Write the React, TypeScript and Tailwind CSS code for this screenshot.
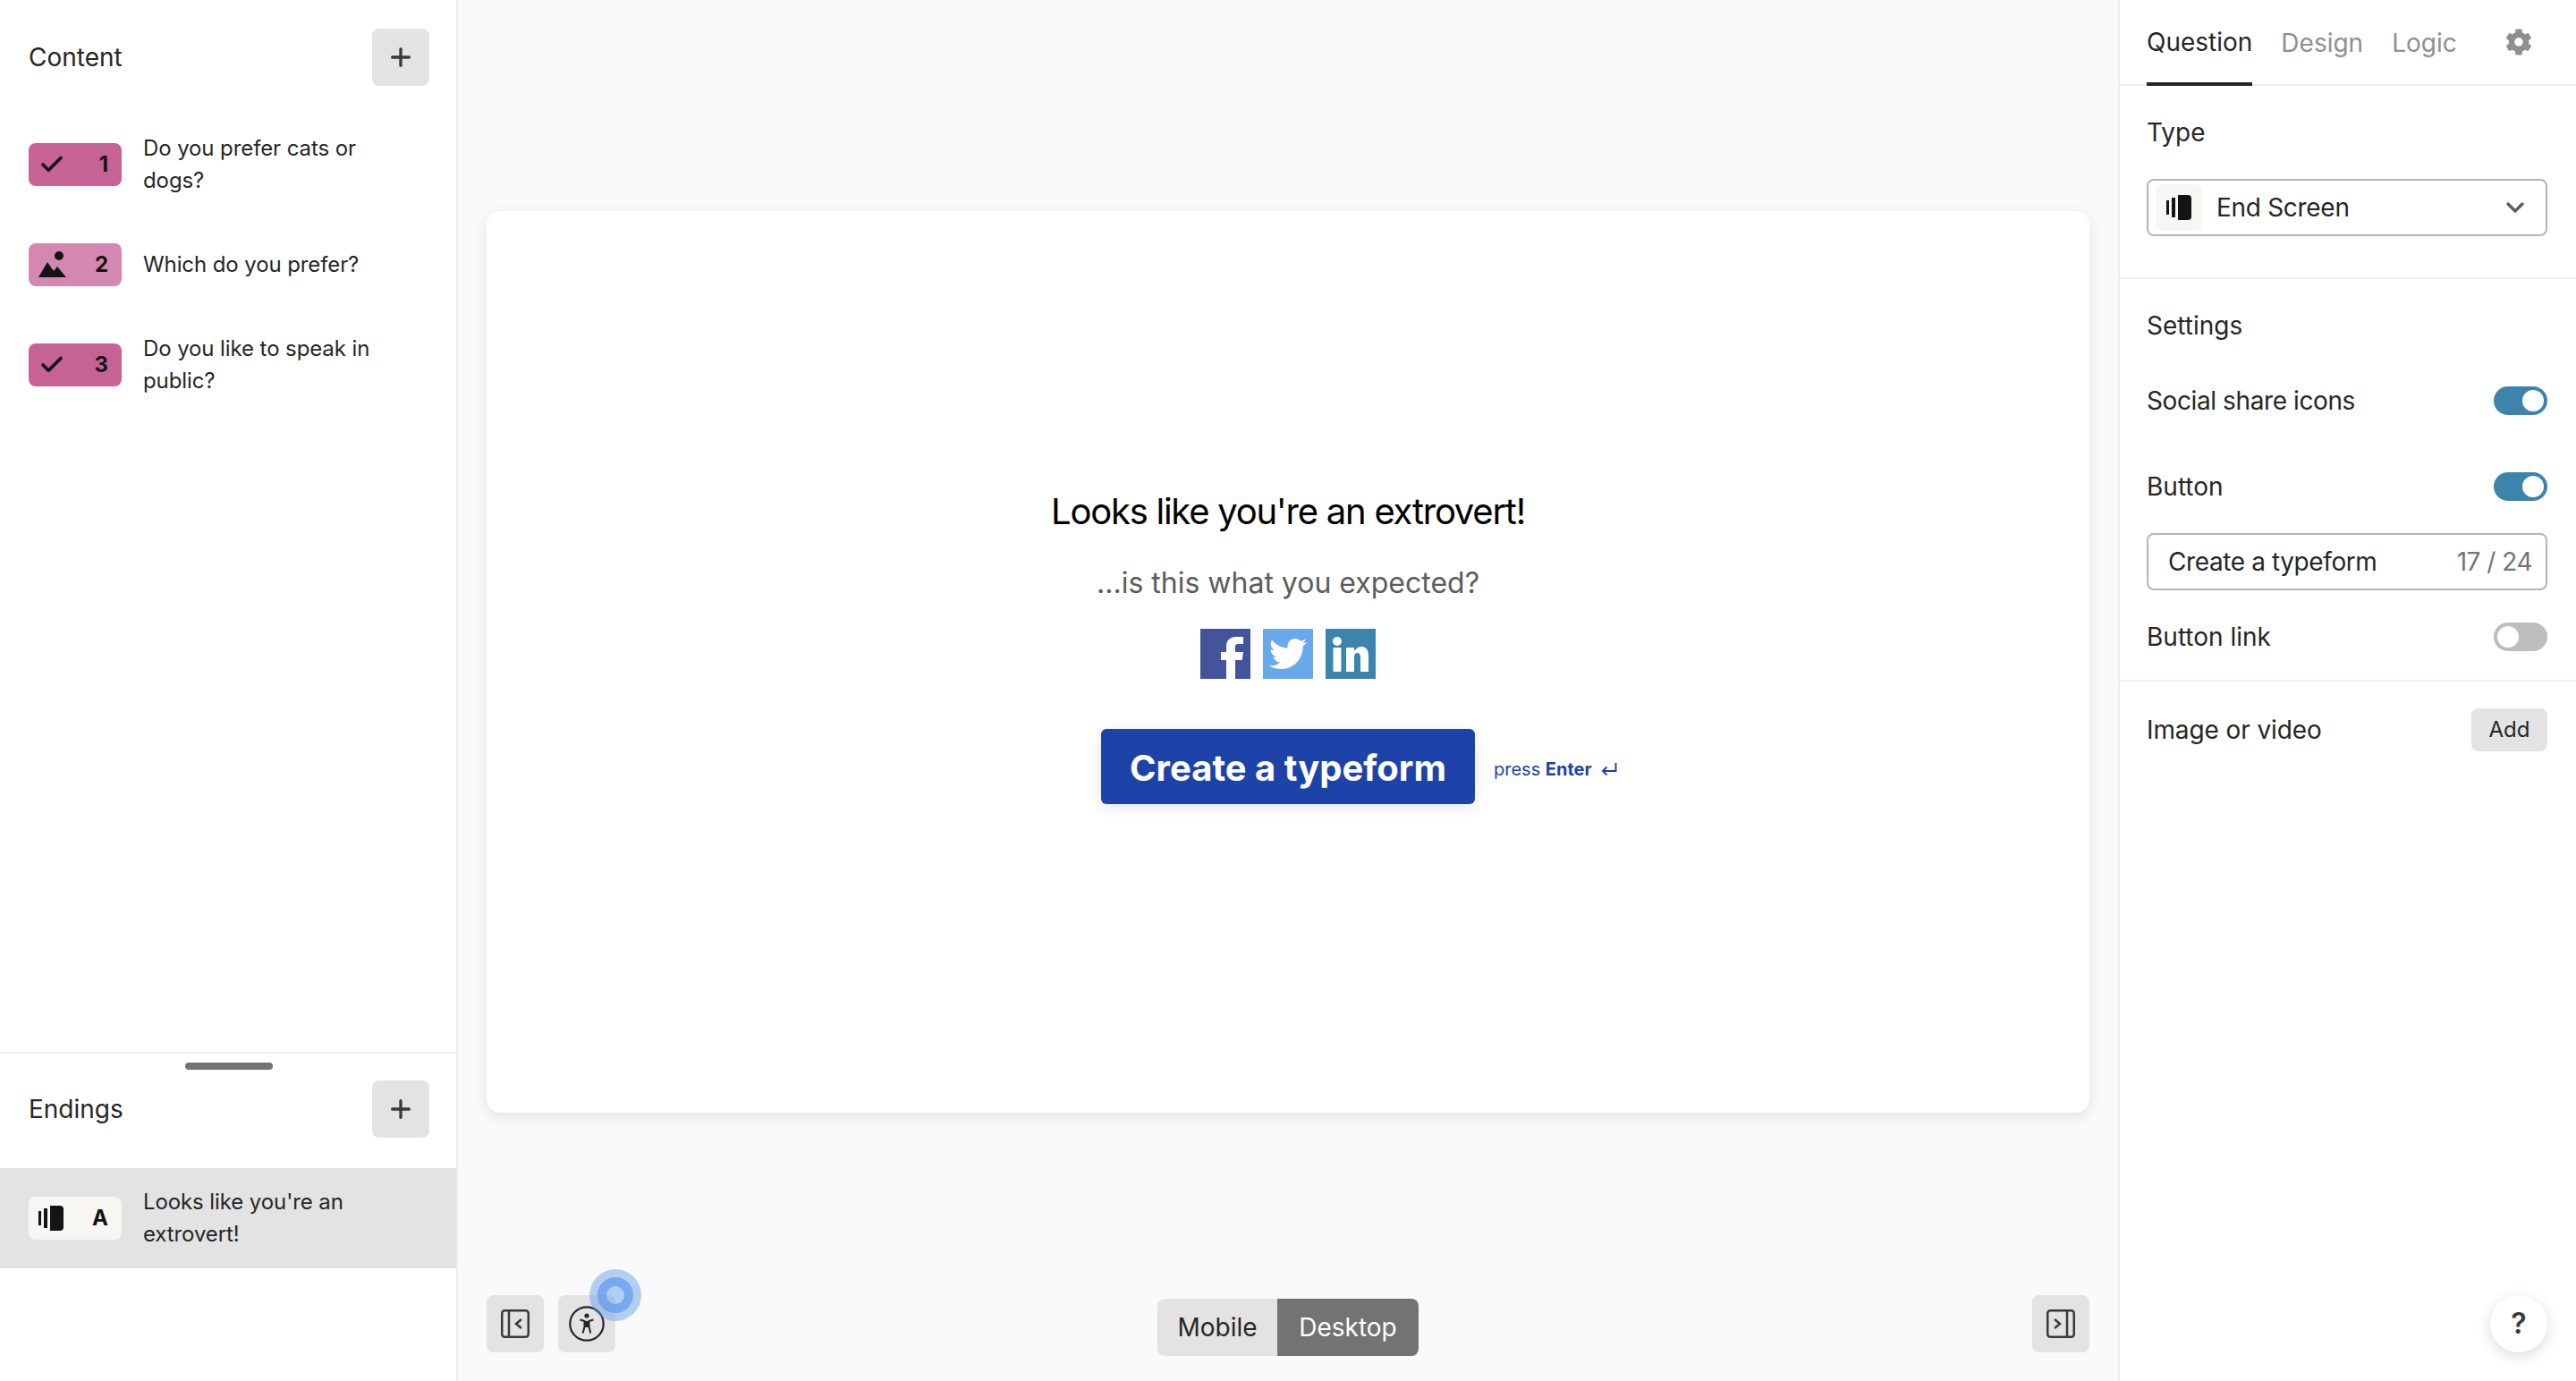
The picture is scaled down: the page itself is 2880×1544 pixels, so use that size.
import React from 'react';
import { Plus, ChevronDown, Check } from 'lucide-react';
import { FaCog, FaTwitter } from 'react-icons/fa';

const font = { fontFamily: 'Inter, "Noto Sans", sans-serif' };

function EndScreenIcon() {
  return (
    <svg width="28" height="28" viewBox="0 0 28 28" fill="#141414">
      <rect x="0" y="6" width="3" height="16" />
      <rect x="6" y="3" width="4" height="22" />
      <path d="M13 0h11a4 4 0 0 1 4 4v20a4 4 0 0 1-4 4H13z" />
    </svg>
  );
}

function PictureIcon() {
  return (
    <svg width="32" height="30" viewBox="0 0 32 30" fill="#141414">
      <circle cx="23" cy="5" r="5" />
      <path d="M0 29 10 12l7 10 4-5 10 12z" />
    </svg>
  );
}

function FacebookIcon() {
  return (
    <svg width="56" height="56" viewBox="0 0 56 56" className="bg-[#43549a]">
      <path fill="#fff" d="M29 56V35h-6v-9h6v-6c0-7 4-11 11-11h8v8h-6c-2 0-3 1-3 3v6h9l-1.2 9H39v21z" />
    </svg>
  );
}

function LinkedinIcon() {
  return (
    <svg width="56" height="56" viewBox="0 0 56 56" className="bg-[#3b84ad]">
      <circle cx="13" cy="14" r="5" fill="#fff" />
      <rect x="8.5" y="21" width="9" height="27" rx="1" fill="#fff" />
      <path fill="#fff" d="M23 21h9v4c2-3 5-5 8-5 6 0 8 4 8 11v17h-9V32c0-3-1-5-3.5-5S32 29 32 32v16h-9z" />
    </svg>
  );
}

function PanelIcon({ side }: { side: 'left' | 'right' }) {
  return (
    <svg width="32" height="32" viewBox="0 0 32 32" fill="none" stroke="#3a3a3a" strokeWidth="2.5">
      <rect x="1.25" y="1.25" width="29.5" height="29.5" rx="3" />
      {side === 'left' ? (
        <>
          <path d="M9 1v30" />
          <path d="M23 11l-6 5 6 5" />
        </>
      ) : (
        <>
          <path d="M23 1v30" />
          <path d="M9 11l6 5-6 5" />
        </>
      )}
    </svg>
  );
}

function AccessibilityIcon() {
  return (
    <svg width="40" height="40" viewBox="0 0 40 40" fill="none">
      <circle cx="20" cy="20" r="18.7" stroke="#262627" strokeWidth="2.2" />
      <circle cx="20" cy="11" r="2.6" fill="#262627" />
      <path d="M12.5 15.5l5 1.6v6l-1.8 7.4M27.5 15.5l-5 1.6v6l1.8 7.4" stroke="#262627" strokeWidth="2" />
      <path d="M17.5 17h5v7h-5z" fill="#262627" />
    </svg>
  );
}

function Badge({ label, color, kind }: { label: string; color: string; kind: 'check' | 'picture' | 'end' }) {
  return (
    <div className={`flex h-[48px] w-[104px] shrink-0 items-center justify-between rounded-[8px] pl-[11px] pr-[15px] ${color}`}>
      {kind === 'check' && <Check className="h-[30px] w-[30px] text-[#141414]" strokeWidth={3} />}
      {kind === 'picture' && <PictureIcon />}
      {kind === 'end' && <EndScreenIcon />}
      <span className="text-[24px] font-bold text-[#141414]">{label}</span>
    </div>
  );
}

function Row({ label, color, kind, text, selected }: { label: string; color: string; kind: 'check' | 'picture' | 'end'; text: string; selected?: boolean }) {
  return (
    <div className={`flex h-[112px] items-center gap-[24px] pl-[32px] pr-[64px] ${selected ? 'bg-[#e3e3e3]' : ''}`}>
      <Badge label={label} color={color} kind={kind} />
      <p className="text-[24px] leading-[36px] tracking-[-0.1px] text-[#262627]">{text}</p>
    </div>
  );
}

function AddButton() {
  return (
    <button className="flex h-[64px] w-[64px] items-center justify-center rounded-[8px] bg-[#e3e3e3] text-[#3a3a3a]">
      <Plus className="h-[32px] w-[32px]" strokeWidth={2.5} />
    </button>
  );
}

function Toggle({ on }: { on: boolean }) {
  return (
    <div className={`flex h-[32px] w-[60px] items-center rounded-full px-[4px] ${on ? 'justify-end bg-[#3d84ac]' : 'justify-start bg-[#bdbdbd]'}`}>
      <div className="h-[24px] w-[24px] rounded-full bg-white" />
    </div>
  );
}

export default function App() {
  return (
    <div className="flex h-[1544px] w-[2880px] overflow-hidden bg-white" style={font}>
      {/* left panel */}
      <aside className="flex w-[512px] shrink-0 flex-col border-r-2 border-[#eeeeee]">
        <div className="h-[1176px] shrink-0">
          <div className="flex h-[128px] items-center justify-between pl-[32px] pr-[30px]">
            <h2 className="text-[28px] text-[#262627]">Content</h2>
            <AddButton />
          </div>
          <Row label="1" color="bg-[#c76394]" kind="check" text="Do you prefer cats or dogs?" />
          <Row label="2" color="bg-[#d487b1]" kind="picture" text="Which do you prefer?" />
          <Row label="3" color="bg-[#c76394]" kind="check" text="Do you like to speak in public?" />
        </div>
        <div className="relative border-t-2 border-[#eeeeee]">
          <div className="absolute left-[207px] top-[10px] h-[8px] w-[98px] rounded-full bg-[#737373]" />
          <div className="flex h-[128px] items-center justify-between pb-[4px] pl-[32px] pr-[30px]">
            <h2 className="text-[28px] text-[#262627]">Endings</h2>
            <AddButton />
          </div>
          <Row label="A" color="bg-[#f7f6f2]" kind="end" text="Looks like you're an extrovert!" selected />
        </div>
      </aside>

      {/* canvas */}
      <main className="flex min-w-0 flex-1 flex-col bg-[#fafafa] px-[32px] pt-[236px]">
        <div className="flex h-[1008px] flex-col items-center rounded-[16px] bg-white pt-[310px] shadow-[0_4px_16px_rgba(0,0,0,0.1)]">
          <h1 className="text-[40px] leading-[52px] tracking-[-1.25px] text-black">Looks like you're an extrovert!</h1>
          <p className="mt-[28px] text-[32px] leading-[52px] text-[#5c5c5c]">...is this what you expected?</p>
          <div className="mt-[25px] flex gap-[14px]">
            <FacebookIcon />
            <div className="flex h-[56px] w-[56px] items-center justify-center bg-[#68a9ec] text-white">
              <FaTwitter size={42} />
            </div>
            <LinkedinIcon />
          </div>
          <div className="relative mt-[56px]">
            <button className="h-[84px] w-[418px] rounded-[6px] bg-[#1e43a8] pt-[3px] text-[40px] font-bold text-white shadow-[0_4px_16px_rgba(0,0,0,0.1)]">
              Create a typeform
            </button>
            <span className="absolute left-[439px] top-[30px] flex items-center gap-[10px] whitespace-nowrap text-[20px] text-[#1e43a8]">
              <span>
                press <b>Enter</b>
              </span>
              <svg width="18" height="14" viewBox="0 0 18 14" fill="none" stroke="#1e43a8" strokeWidth="2">
                <path d="M16.5 0v9H2M6.5 4.5 2 9l4.5 4.5" />
              </svg>
            </span>
          </div>
        </div>
        <div className="mt-[204px] grid grid-cols-[1fr_auto_1fr] items-start">
          <div className="flex gap-[16px]">
            <div className="flex h-[64px] w-[64px] items-center justify-center rounded-[8px] bg-[#e3e3e3]">
              <PanelIcon side="left" />
            </div>
            <div className="relative flex h-[64px] w-[64px] items-center justify-center rounded-[8px] bg-[#e3e3e3]">
              <AccessibilityIcon />
              <div className="absolute -right-[29px] -top-[29px] flex h-[58px] w-[58px] items-center justify-center rounded-full bg-[#5c9aeb]/45">
                <div className="h-[40px] w-[40px] rounded-full border-[10px] border-[#5c9aeb]/70" />
              </div>
            </div>
          </div>
          <div className="mt-[4px] flex h-[64px] overflow-hidden rounded-[8px] text-[28px]">
            <div className="flex w-[134px] items-center justify-center bg-[#e3e3e3] text-[#262627]">Mobile</div>
            <div className="flex w-[158px] items-center justify-center bg-[#737373] text-white">Desktop</div>
          </div>
          <div className="flex h-[64px] w-[64px] items-center justify-center justify-self-end rounded-[8px] bg-[#e3e3e3]">
            <PanelIcon side="right" />
          </div>
        </div>
      </main>

      {/* right panel */}
      <aside className="relative w-[512px] shrink-0 border-l-2 border-[#eeeeee] text-[#262627]">
        <div className="flex h-[96px] items-start gap-[32px] border-b-2 border-[#eeeeee] pl-[30px] pr-[49px] text-[28px]">
          <div className="flex h-[96px] items-center border-b-4 border-[#262627] pt-[2px]">Question</div>
          <div className="flex h-[94px] items-center pt-[2px] text-[#8f8f8f]">Design</div>
          <div className="flex h-[94px] items-center pt-[2px] text-[#8f8f8f]">Logic</div>
          <div className="ml-auto flex h-[94px] items-center text-[#8f8f8f]">
            <FaCog size={30} />
          </div>
        </div>
        <div className="h-[216px] border-b-2 border-[#eeeeee] pl-[30px] pr-[32px] pt-[34px]">
          <div className="text-[28px] leading-[36px]">Type</div>
          <div className="mt-[34px] flex h-[64px] items-center rounded-[8px] border-2 border-[#b5b5b5] pl-[8px] pr-[18px]">
            <div className="flex h-[52px] w-[52px] items-center justify-center rounded-[8px] bg-[#f7f6f2]">
              <EndScreenIcon />
            </div>
            <span className="ml-[16px] flex-1 text-[28px] tracking-[-0.3px]">End Screen</span>
            <ChevronDown className="h-[32px] w-[32px] text-[#5c5c5c]" strokeWidth={2.5} />
          </div>
        </div>
        <div className="h-[450px] border-b-2 border-[#eeeeee] pl-[30px] pr-[32px] pt-[34px] text-[28px]">
          <div className="leading-[36px]">Settings</div>
          <div className="mt-[48px] flex h-[36px] items-center justify-between tracking-[-0.4px]">Social share icons<Toggle on /></div>
          <div className="mt-[60px] flex h-[36px] items-center justify-between">Button<Toggle on /></div>
          <div className="mt-[34px] flex h-[64px] items-center justify-between rounded-[8px] border-2 border-[#b5b5b5] pl-[22px] pr-[15px]">
            <span className="tracking-[-0.4px]">Create a typeform</span>
            <span className="tracking-[-0.5px] text-[#737373]">17 / 24</span>
          </div>
          <div className="mt-[34px] flex h-[36px] items-center justify-between">Button link<Toggle on={false} /></div>
        </div>
        <div className="flex items-center justify-between pl-[30px] pr-[32px] pt-[30px] text-[28px]">
          <span className="tracking-[-0.1px]">Image or video</span>
          <button className="h-[48px] w-[85px] rounded-[8px] bg-[#e3e3e3] text-[24px]">Add</button>
        </div>
        <button className="absolute left-[414px] top-[1448px] flex h-[64px] w-[64px] items-center justify-center rounded-full bg-white text-[32px] font-semibold text-[#3a3a3a] shadow-[0_4px_16px_rgba(0,0,0,0.15)]">?</button>
      </aside>
    </div>
  );
}
